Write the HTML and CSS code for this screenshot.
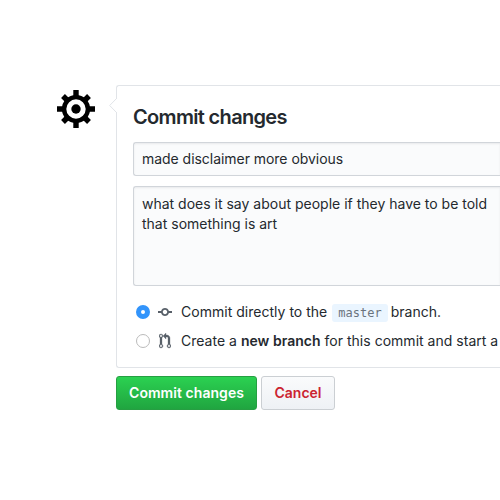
FILE: index.html
```
<!DOCTYPE html>
<html lang="en">
<head>
<meta charset="utf-8">
<title>Commit changes</title>
<link rel="stylesheet" href="styles.css">
</head>
<body>
<main class="commit-form">
  <svg class="avatar" viewBox="-19 -19 38 38" aria-hidden="true">
    <g stroke="#000" stroke-width="5.4">
      <path d="M0-19V-11M0 11V19M-19 0H-11M11 0H19"/>
      <path d="M-13-13L-9-9M13-13L9-9M-13 13L-9 9M13 13L9 9"/>
    </g>
    <circle r="11.900" fill="none" stroke="#000" stroke-width="4.400"/>
    <circle r="4.700"/>
  </svg>
  <section class="content">
    <div class="card">
      <svg class="caret" viewBox="0 0 8 16" aria-hidden="true"><path d="M8 0L.7 7.5L8 15" fill="#fff" stroke="#e1e4e8"/></svg>
      <h1 class="title">Commit changes</h1>
      <div class="field summary">made disclaimer more obvious</div>
      <div class="field description">what does it say about people if they have to be told<br>that something is art</div>
      <div class="choice">
        <span class="radio checked"></span>
        <svg class="icon" width="14" height="16" viewBox="0 0 14 16"><path fill-rule="evenodd" d="M10.860 7c-.450-1.720-2-3-3.860-3-1.860 0-3.410 1.280-3.860 3H0v2h3.140c.450 1.720 2 3 3.860 3 1.860 0 3.410-1.280 3.860-3H14V7h-3.140zM7 10.200c-1.220 0-2.200-.980-2.200-2.200 0-1.220.980-2.200 2.200-2.200 1.220 0 2.200.980 2.200 2.200 0 1.220-.980 2.200-2.200 2.200z"/></svg>
        <span class="label">Commit directly to the <code class="branch">master</code> branch.</span>
      </div>
      <div class="choice">
        <span class="radio"></span>
        <svg class="icon pull" width="12" height="16" viewBox="0 0 12 16"><path fill-rule="evenodd" d="M11 11.280V5c-.030-.780-.340-1.470-.940-2.060C9.460 2.350 8.780 2.030 8 2H7V0L4 3l3 3V4h1c.270.020.480.110.690.310.210.200.300.420.310.690v6.280A1.993 1.993 0 0 0 10 15a1.993 1.993 0 0 0 1-3.720zm-1 2.920c-.660 0-1.200-.550-1.200-1.200 0-.650.550-1.200 1.200-1.200.650 0 1.200.550 1.200 1.200 0 .650-.550 1.200-1.200 1.200zM4 3c0-1.110-.890-2-2-2a1.993 1.993 0 0 0-1 3.720v6.560A1.993 1.993 0 0 0 2 15a1.993 1.993 0 0 0 1-3.720V4.720c.590-.340 1-.980 1-1.720zm-.800 10c0 .660-.550 1.200-1.200 1.200-.650 0-1.200-.550-1.200-1.200 0-.650.550-1.200 1.200-1.200.650 0 1.200.550 1.200 1.200zM2 4.200C1.340 4.200.8 3.650.8 3c0-.650.550-1.200 1.200-1.200.650 0 1.200.550 1.200 1.200 0 .650-.550 1.200-1.200 1.200z"/></svg>
        <span class="label new">Create a <b>new branch</b> for this commit and start a</span>
      </div>
    </div>
    <div class="actions">
      <button class="btn primary">Commit changes</button>
      <button class="btn cancel">Cancel</button>
    </div>
  </section>
</main>
</body>
</html>
```
FILE: styles.css
```
* { box-sizing: border-box; }
body {
  margin: 0;
  height: 500px;
  overflow: hidden;
  background: #fff;
  color: #24292e;
  font: 14px/19px Inter, "Liberation Sans", sans-serif;
}
.commit-form { display: flex; align-items: flex-start; padding: 85px 0 0 57px; }
.avatar { flex: none; width: 38px; height: 38px; margin: 5px 21px 0 0; }
.content { flex: 1; min-width: 0; }
.card {
  position: relative;
  height: 283px;
  padding: 21px 0 0 16px;
  border: 1px solid #e1e4e8;
  border-right: 0;
  border-radius: 3px 0 0 3px;
}
.caret { position: absolute; left: -8px; top: 12px; width: 8px; height: 16px; }
.title { margin: 0 0 14px; font-size: 20px; line-height: 21px; font-weight: 600; letter-spacing: -0.67px; }
.field {
  padding: 6px 8px;
  border: 1px solid #d1d5da;
  border-right: 0;
  border-radius: 3px 0 0 3px;
  background: #fafbfc;
  box-shadow: inset 0 1px 2px rgba(27, 31, 35, .075);
  white-space: nowrap;
}
.summary { height: 34px; margin-bottom: 10px; letter-spacing: -0.04px; }
.description { height: 100px; margin-bottom: 11px; padding-top: 7px; line-height: 20px; }
.choice { display: flex; align-items: center; height: 29px; padding-left: 3px; white-space: nowrap; }
.radio { flex: none; width: 14px; height: 14px; margin-right: 8px; border: 1px solid #bbb; border-radius: 50%; background: #fff; }
.radio.checked { border: 5px solid #3294fb; }
.icon { flex: none; fill: #586069; }
.pull { stroke: #586069; stroke-width: .3; margin-left: 1px; }
.label { margin-left: 9px; letter-spacing: 0.02px; }
.label.new { margin-left: 10px; }
b { font-weight: 600; }
.branch {
  display: inline-block;
  margin-left: 1px;
  margin-right: -1px;
  padding: 0 6px;
  border-radius: 3px;
  background: #eaf5ff;
  color: #6a737d;
  font: 12px/18px "DejaVu Sans Mono", monospace;
}
.actions { display: flex; gap: 4px; margin-top: 8px; }
.btn {
  height: 34px;
  padding: 0;
  border: 1px solid #cbcfd3;
  border-radius: 3px;
  font: 600 14px/20px Inter, "Liberation Sans", sans-serif;
}
.primary { width: 141px; color: #fff; border-color: #269f42; background: linear-gradient(#2bd151, #20a540); letter-spacing: 0.05px; }
.cancel { width: 74px; color: #cb2431; background: linear-gradient(#fafbfc, #eef1f5); }
```
